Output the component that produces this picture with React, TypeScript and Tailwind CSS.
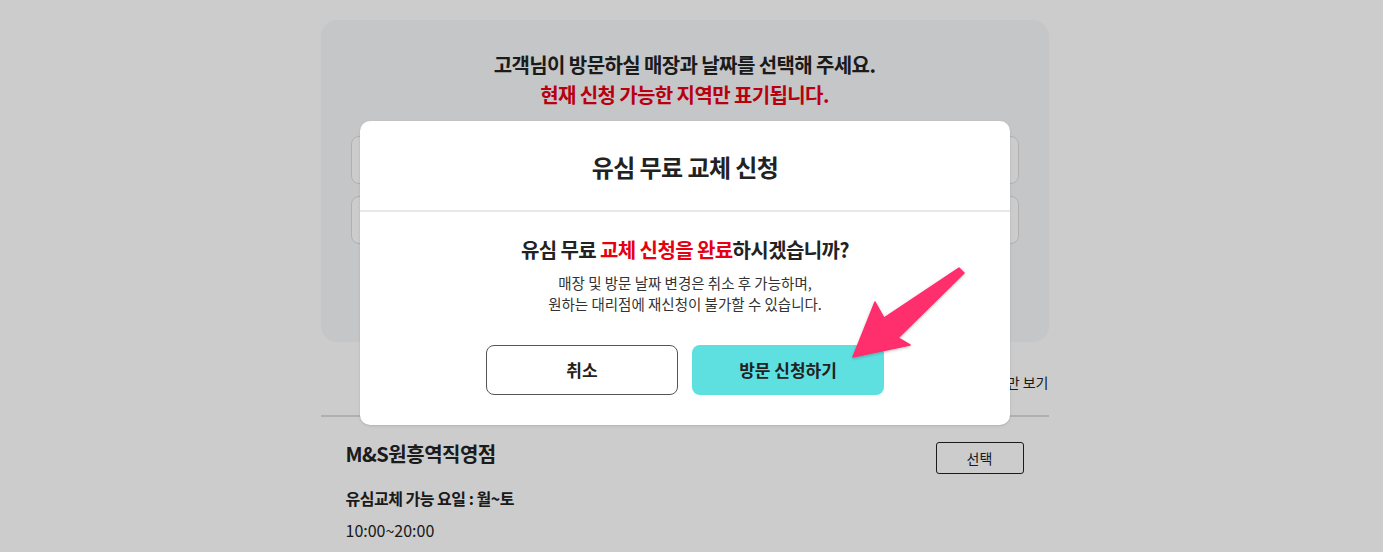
import React from 'react';

const font = { fontFamily: '"Noto Sans CJK KR", "Noto Sans", sans-serif' };

const StorePage: React.FC = () => (
  <div className="w-[1369px]">
    <div className="w-[728px] mx-auto pt-5">
      <div className="bg-[#f7f8fa] rounded-2xl px-[30px] pt-[30px] pb-[98px] text-center">
        <p className="text-[20px] font-bold text-[#222] leading-[30px] tracking-[-0.6px]">고객님이 방문하실 매장과 날짜를 선택해 주세요.</p>
        <p className="text-[20px] font-bold text-[#e60012] leading-[30px] tracking-[-0.6px]">현재 신청 가능한 지역만 표기됩니다.</p>
        <div className="mt-[26px] flex flex-col gap-[12px]">
          <div className="h-[48px] bg-white border border-[#ddd] rounded-lg" />
          <div className="h-[48px] bg-white border border-[#ddd] rounded-lg" />
        </div>
      </div>
      <div className="flex justify-end items-center gap-2 mt-[30px] h-[20px] text-[14px] text-[#222]">
        <span className="w-4 h-4 border border-[#999] rounded-sm bg-white" />
        <span>신청 가능한 매장만 보기</span>
      </div>
      <div className="mt-[23px] border-t-2 border-[#ddd]" />
      <div className="px-[25px] pt-[25px]">
        <div className="flex items-start justify-between">
          <p className="text-[20px] leading-[24px] font-bold text-[#222] tracking-[-0.5px]">M&amp;S원흥역직영점</p>
          <button className="w-[88px] h-[32px] border border-[#222] rounded-[3px] text-[14px] text-[#222] bg-white">선택</button>
        </div>
        <p className="mt-[12px] text-[16px] leading-[24px] font-bold text-[#222] tracking-[-0.5px]">유심교체 가능 요일 : 월~토</p>
        <p className="mt-[8px] text-[16px] leading-[24px] text-[#222]">10:00~20:00</p>
      </div>
    </div>
  </div>
);

const Modal: React.FC = () => (
  <div className="absolute left-[360px] top-[121px] w-[650px] bg-white rounded-[10px] shadow-sm">
    <div className="h-[91px] flex items-center justify-center border-b-2 border-[#e8e8e8]">
      <h2 className="text-[24px] font-bold text-[#222] tracking-[-0.6px] mt-[2px]">유심 무료 교체 신청</h2>
    </div>
    <div className="pt-[23px] pb-[30px] text-center">
      <p className="text-[20px] font-bold text-[#222] tracking-[-0.6px] leading-[30px]">
        유심 무료 <span className="text-[#e60012]">교체 신청을 완료</span>하시겠습니까?
      </p>
      <p className="mt-[7px] text-[14.5px] text-[#333] leading-[21px]">
        매장 및 방문 날짜 변경은 취소 후 가능하며,<br />원하는 대리점에 재신청이 불가할 수 있습니다.
      </p>
      <div className="mt-[31px] flex justify-center gap-[14px]">
        <button className="w-[192px] h-[50px] border border-[#555] rounded-lg bg-white text-[17px] font-bold text-[#222]">취소</button>
        <button className="w-[192px] h-[50px] rounded-lg bg-[#5ee0e0] text-[17px] font-bold text-[#222]">방문 신청하기</button>
      </div>
    </div>
  </div>
);

const Arrow: React.FC = () => (
  <svg className="absolute left-0 top-0" width="1383" height="552" style={{ pointerEvents: 'none' }}>
    <defs>
      <filter id="sh" x="-20%" y="-20%" width="140%" height="140%">
        <feDropShadow dx="0" dy="1" stdDeviation="1.5" floodColor="#000" floodOpacity="0.25" />
      </filter>
    </defs>
    <polygon
      points="853,357 875,302 884,318 959,268 964,273 898,338 910,345"
      fill="#ff2d6c"
      stroke="#ff2d6c"
      strokeWidth="1.5"
      strokeLinejoin="round"
      filter="url(#sh)"
    />
  </svg>
);

export default function App() {
  return (
    <div className="relative w-[1383px] h-[552px] overflow-hidden bg-white" style={font}>
      <StorePage />
      <div className="absolute inset-0 bg-black/20" />
      <Modal />
      <Arrow />
    </div>
  );
}
